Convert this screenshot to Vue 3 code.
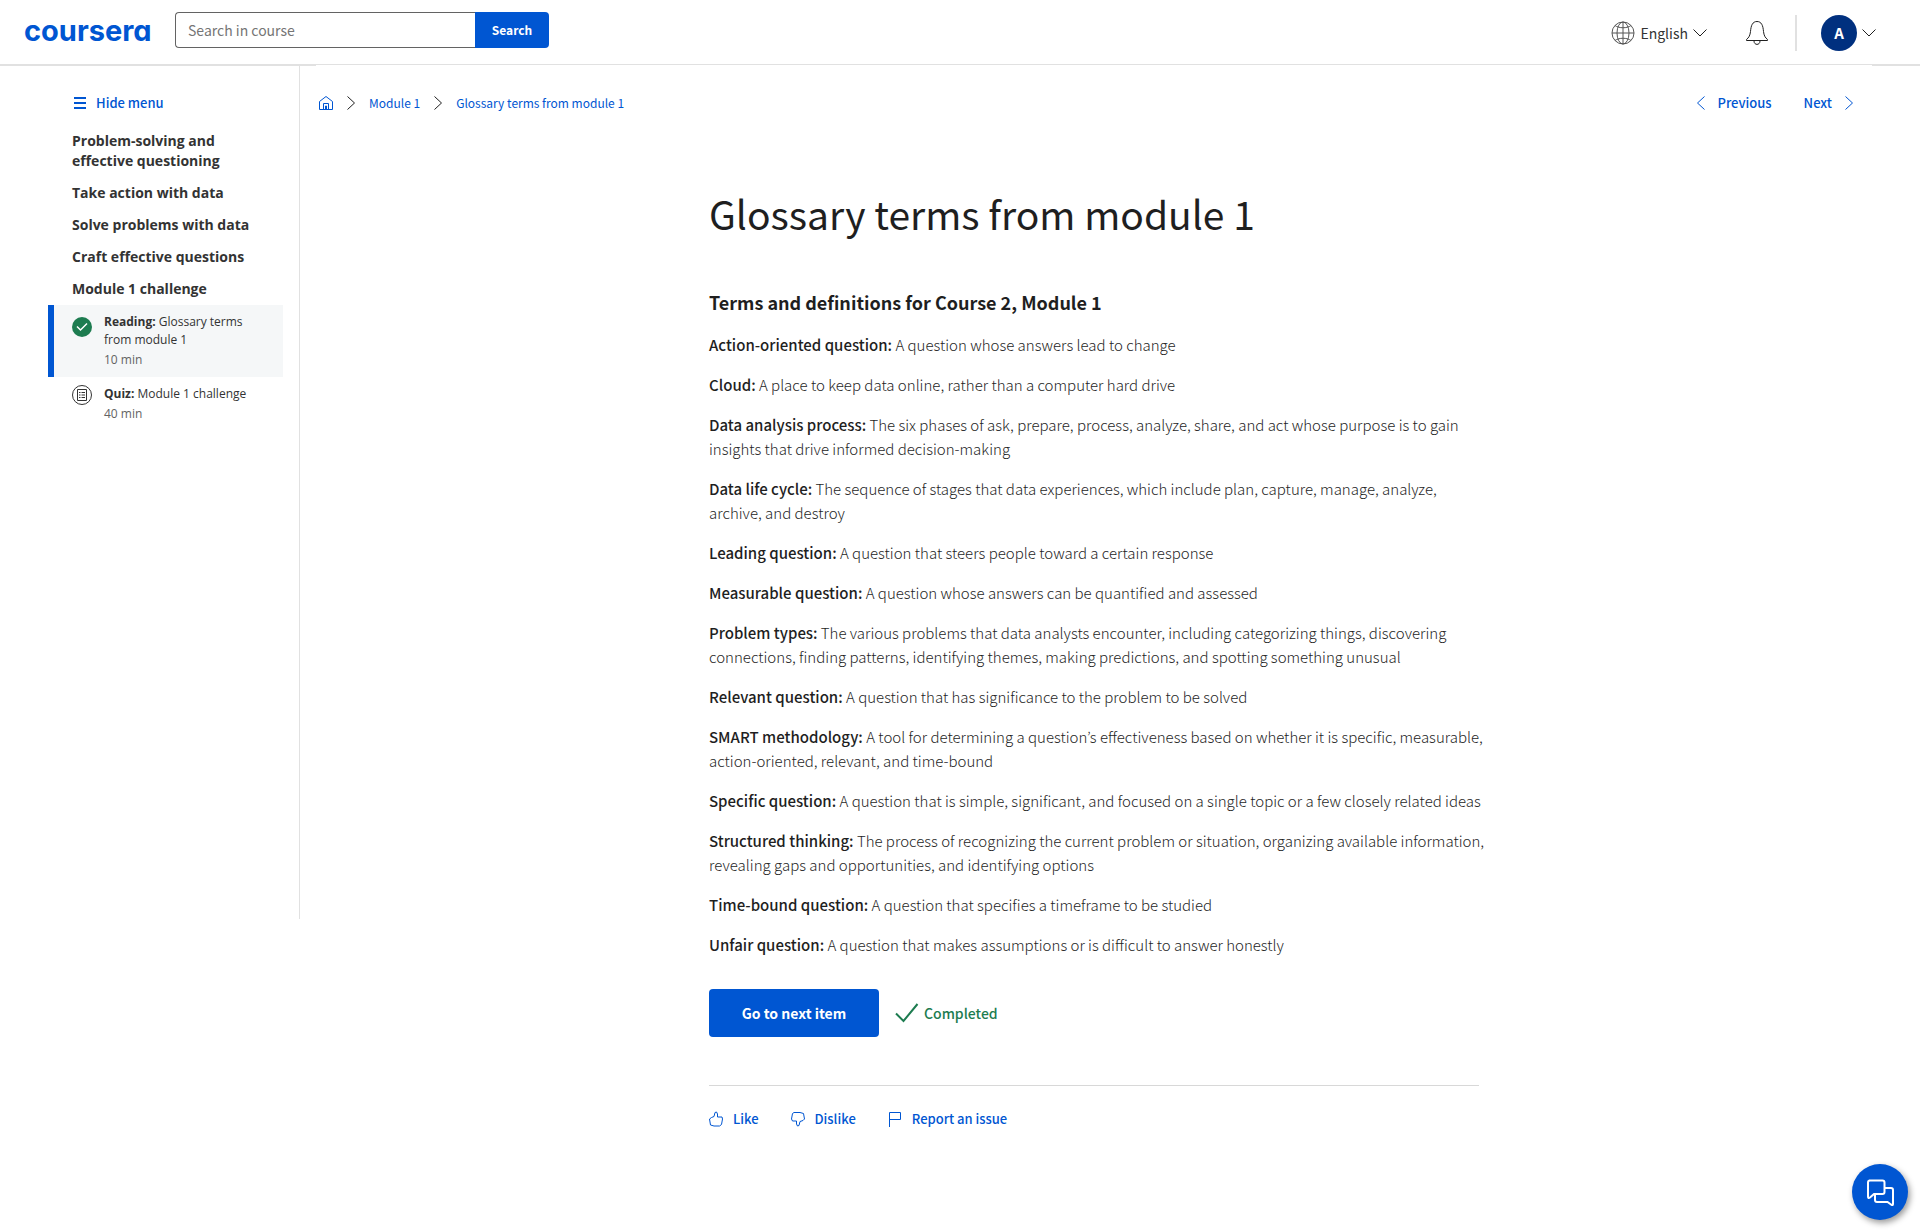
<script setup>
const sections = [
  'Problem-solving and effective questioning',
  'Take action with data',
  'Solve problems with data',
  'Craft effective questions',
  'Module 1 challenge',
]

const terms = [
  { term: 'Action-oriented question:', text: 'A question whose answers lead to change' },
  { term: 'Cloud:', text: 'A place to keep data online, rather than a computer hard drive' },
  { term: 'Data analysis process:', text: 'The six phases of ask, prepare, process, analyze, share, and act whose purpose is to gain insights that drive informed decision-making' },
  { term: 'Data life cycle:', text: 'The sequence of stages that data experiences, which include plan, capture, manage, analyze, archive, and destroy' },
  { term: 'Leading question:', text: 'A question that steers people toward a certain response' },
  { term: 'Measurable question:', text: 'A question whose answers can be quantified and assessed' },
  { term: 'Problem types:', text: 'The various problems that data analysts encounter, including categorizing things, discovering connections, finding patterns, identifying themes, making predictions, and spotting something unusual' },
  { term: 'Relevant question:', text: 'A question that has significance to the problem to be solved' },
  { term: 'SMART methodology:', text: 'A tool for determining a question’s effectiveness based on whether it is specific, measurable, action-oriented, relevant, and time-bound' },
  { term: 'Specific question:', text: 'A question that is simple, significant, and focused on a single topic or a few closely related ideas' },
  { term: 'Structured thinking:', text: 'The process of recognizing the current problem or situation, organizing available information, revealing gaps and opportunities, and identifying options' },
  { term: 'Time-bound question:', text: 'A question that specifies a timeframe to be studied' },
  { term: 'Unfair question:', text: 'A question that makes assumptions or is difficult to answer honestly' },
]
</script>

<template>
  <div class="page">
    <header class="header">
      <a class="logo" href="#">coursera</a>
      <form class="search" role="search" @submit.prevent>
        <input type="text" placeholder="Search in course" aria-label="Search in course" />
        <button type="submit">Search</button>
      </form>
      <div class="tools">
        <button class="language" type="button">
          <svg width="24" height="24" viewBox="0 0 24 24" aria-hidden="true">
            <circle cx="12" cy="12" r="11" />
            <ellipse cx="12" cy="12" rx="6" ry="11" />
            <path d="M1 12h22M12 1v22M4 4.500c4 3 12 3 16 0M4 19.500c4-3 12-3 16 0" />
          </svg>
          <span>English</span>
          <svg class="dark" width="14" height="8" viewBox="0 0 14 8" aria-hidden="true"><path d="M.500.500 7 7 13.500.500" /></svg>
        </button>
        <button class="bell" type="button" aria-label="Notifications">
          <svg class="dark" width="24" height="26" viewBox="0 0 24 26" aria-hidden="true">
            <path d="M1.500 20.500v-1c2.500-2 3.500-4 4-8C6 5.500 7.500 1.500 12 1.500s6 4 6.500 10c.5 4 1.500 6 4 8v1zM9 21c0 4.500 6 4.500 6 0" />
          </svg>
        </button>
        <span class="rule"></span>
        <button class="account" type="button" aria-label="Account">
          <span class="avatar">A</span>
          <svg class="dark" width="14" height="8" viewBox="0 0 14 8" aria-hidden="true"><path d="M.500.500 7 7 13.500.500" /></svg>
        </button>
      </div>
    </header>

    <div class="body">
      <aside class="sidebar">
        <button class="hide" type="button">
          <svg width="12" height="12" viewBox="0 0 12 12" aria-hidden="true"><path d="M0 1h12M0 6h12M0 11h12" /></svg>
          Hide menu
        </button>
        <h2 v-for="s in sections" :key="s">{{ s }}</h2>
        <a class="item active" href="#">
          <svg width="20" height="20" viewBox="0 0 20 20" aria-hidden="true">
            <circle cx="10" cy="10" r="10" fill="#1d7c50" />
            <path d="m5 9.500 3.500 3.500 6.500-6.500" fill="none" stroke="#fff" stroke-width="1.500" />
          </svg>
          <span class="item-text"><span><b>Reading:</b> Glossary terms from module 1</span><small>10 min</small></span>
        </a>
        <a class="item" href="#">
          <svg width="20" height="20" viewBox="0 0 20 20" fill="none" stroke="#333" aria-hidden="true">
            <circle cx="10" cy="10" r="9.500" />
            <path d="M5.500 4.500h9v11h-9zM7 7.500h1.500M9.500 7.500H13M7 10h1.500M9.500 10H13M7 12.500h1.500M9.500 12.500H13" />
          </svg>
          <span class="item-text"><span><b>Quiz:</b> Module 1 challenge</span><small>40 min</small></span>
        </a>
      </aside>

      <main class="main">
        <div class="topbar">
          <nav class="crumbs" aria-label="Breadcrumb">
            <a href="#" aria-label="Home">
              <svg width="14" height="14" viewBox="0 0 14 14" aria-hidden="true"><path d="M.500 5.500 7 .500l6.500 5v8H.500zM4.500 13.500v-6h5v6M6.500 10h1v3.500h-1z" /></svg>
            </a>
            <svg class="dark" width="8" height="14" viewBox="0 0 8 14" aria-hidden="true"><path d="m.500.500 7 6.500-7 6.500" /></svg>
            <a href="#">Module 1</a>
            <svg class="dark" width="8" height="14" viewBox="0 0 8 14" aria-hidden="true"><path d="m.500.500 7 6.500-7 6.500" /></svg>
            <a href="#">Glossary terms from module 1</a>
          </nav>
          <nav class="pager" aria-label="Items">
            <a href="#">
              <svg width="8" height="14" viewBox="0 0 8 14" aria-hidden="true"><path d="m7.500.500-7 6.500 7 6.500" /></svg>
              Previous
            </a>
            <a href="#">
              Next
              <svg width="8" height="14" viewBox="0 0 8 14" aria-hidden="true"><path d="m.500.500 7 6.500-7 6.500" /></svg>
            </a>
          </nav>
        </div>

        <article class="article">
          <h1>Glossary terms from module 1</h1>
          <h2>Terms and definitions for Course 2, Module 1</h2>
          <p v-for="t in terms" :key="t.term"><strong>{{ t.term }}</strong> {{ t.text }}</p>
          <div class="complete">
            <button type="button">Go to next item</button>
            <span class="done">
              <svg width="24" height="20" viewBox="0 0 24 20" aria-hidden="true"><path d="m1 10.500 7.500 7.500L22.500 1" /></svg>
              Completed
            </span>
          </div>
          <div class="feedback">
            <button type="button">
              <svg width="14" height="16" viewBox="0 0 14 16" aria-hidden="true"><path d="M.500 8 2.500 6.500 5 5.500 6 1.500 7.500 1 8.500 3v3h4.500l.5 2-1 5.500-2 1.500H5l-3.500-1z" /></svg>
              Like
            </button>
            <button type="button">
              <svg width="14" height="16" viewBox="0 0 14 16" aria-hidden="true"><path d="M13.500 8 12 9.500 9 10.500 8 14.500 6.500 15 5.500 13v-3H1.500L.500 8l1-5.500L3 1.500h6l3.500 1z" /></svg>
              Dislike
            </button>
            <button type="button">
              <svg width="14" height="16" viewBox="0 0 14 16" aria-hidden="true"><path d="M1.500 16V1.500h11v7h-11" /></svg>
              Report an issue
            </button>
          </div>
        </article>
      </main>
    </div>

    <button class="chat" type="button" aria-label="Chat">
      <svg width="28" height="28" viewBox="0 0 28 28" aria-hidden="true">
        <path d="M3 2.500h13.500q2 0 2 2V14q0 2-2 2H8L4 19.500q-2 1.500-2-1v-14q0-2 2-2z" />
        <path d="M18.500 10H25q2 0 2 2v14q0 2-2 .500L21.500 24H11q-2 0-2-2v-6" />
      </svg>
    </button>
  </div>
</template>

<style>
body {
  margin: 0;
  background: #fff;
}
</style>

<style scoped>
.page {
  font-family: 'Noto Sans CJK KR', 'Noto Sans', sans-serif;
  font-size: 14px;
  line-height: 24px;
  color: #1f1f1f;
}
* {
  box-sizing: border-box;
}
svg {
  display: block;
  flex: none;
}
button {
  font: inherit;
  color: inherit;
  padding: 0;
  border: 0;
  background: none;
  cursor: pointer;
}
a {
  color: #0056d2;
  text-decoration: none;
}
.header {
  display: flex;
  align-items: flex-start;
  height: 66px;
  padding: 12px 44px 0 24px;
  border-bottom: 2px solid #e1e1e1;
}
.logo {
  width: 151px;
  font-family: Inter, sans-serif;
  font-feature-settings: 'cv11';
  font-size: 29px;
  font-weight: 700;
  line-height: 38px;
}
.search {
  display: flex;
  height: 36px;
}
.search input {
  width: 300px;
  padding: 0 12px;
  border: 1px solid #636363;
  border-right: 0;
  border-radius: 4px 0 0 4px;
  font: inherit;
}
.search input::placeholder {
  color: #757575;
}
.search button {
  width: 74px;
  border-radius: 0 4px 4px 0;
  background: #0056d2;
  color: #fff;
  font-size: 12px;
  font-weight: 700;
}
.tools {
  display: flex;
  align-items: center;
  height: 36px;
  margin: 3px 0 0 auto;
}
.tools svg,
.crumbs svg,
.pager svg,
.feedback svg,
.done svg,
.hide svg,
.chat svg {
  fill: none;
  stroke: currentColor;
}
.dark {
  color: #1f1f1f;
}
.language,
.account {
  display: flex;
  align-items: center;
  gap: 5px;
  color: #555;
}
.language span {
  color: #333;
}
.bell {
  margin: 0 26px 0 38px;
}
.rule {
  width: 2px;
  height: 36px;
  margin-right: 24px;
  background: #e1e1e1;
}
.avatar {
  width: 36px;
  border-radius: 50%;
  background: #00307f;
  color: #fff;
  font-size: 15px;
  font-weight: 700;
  line-height: 36px;
}
.body {
  display: flex;
  align-items: flex-start;
}
.sidebar {
  width: 300px;
  min-height: calc(75vh - 71px);
  padding: 25px 16px 0 48px;
  border-right: 1px solid #e1e1e1;
  font-family: 'Open Sans', sans-serif;
}
.hide {
  display: flex;
  align-items: center;
  gap: 10px;
  margin: 0 0 16px 26px;
  color: #0056d2;
  font-family: 'Noto Sans CJK KR', sans-serif;
  font-size: 13px;
  font-weight: 500;
}
.hide svg {
  stroke-width: 2;
}
.sidebar h2 {
  margin: 0 24px 12px;
  color: #333;
  font-size: 14px;
  font-weight: 700;
  line-height: 20px;
}
.sidebar h2:last-of-type {
  margin-bottom: 6px;
}
.item {
  display: flex;
  gap: 12px;
  padding: 8px 24px 8px 18px;
  border-left: 6px solid transparent;
  color: #333;
  font-size: 12px;
  font-weight: 400;
  line-height: 18px;
}
.item svg {
  margin-top: 4px;
}
.item + .item svg {
  margin-top: 0;
}
.item b {
  font-weight: 700;
}
.item small {
  display: block;
  margin-top: 2px;
  color: #636363;
  font-size: 12px;
}
.active {
  border-color: #0056d2;
  background: #f5f7f8;
}
.main {
  position: relative;
  flex: 1;
  margin: -1px 48px 0 16px;
  background: #fff;
}
.topbar,
.crumbs,
.pager,
.pager a,
.complete,
.done,
.feedback,
.feedback button {
  display: flex;
  align-items: center;
}
.topbar {
  justify-content: space-between;
  padding: 26px 19px 0 3px;
  font-size: 12px;
}
.crumbs {
  gap: 14px;
}
.pager {
  gap: 32px;
  font-size: 13px;
  font-weight: 500;
}
.pager a {
  gap: 13px;
}
.article {
  width: 770px;
  max-width: 100%;
  margin: 0 auto;
}
.article h1 {
  margin: 70px 0 49px;
  font-size: 39px;
  font-weight: 400;
  line-height: 56px;
}
.article h2 {
  margin: 0 0 19px;
  font-size: 18px;
  font-weight: 700;
}
.article p {
  margin: 0 -12px 16px 0;
  font-size: 15px;
  font-weight: 300;
}
.article strong {
  font-weight: 500;
}
.complete {
  gap: 16px;
  margin-top: 32px;
}
.complete button {
  width: 170px;
  height: 48px;
  border-radius: 4px;
  background: #0056d2;
  color: #fff;
  font-weight: 700;
}
.done {
  gap: 5px;
  color: #1d7c50;
  font-weight: 500;
}
.done svg {
  stroke-width: 2;
}
.feedback {
  gap: 32px;
  margin-top: 48px;
  padding: 21px 0 64px;
  border-top: 1px solid #d8d8d8;
}
.feedback button {
  gap: 10px;
  color: #0056d2;
  font-size: 13px;
  font-weight: 500;
}
.chat {
  position: fixed;
  right: 12px;
  bottom: 12px;
  display: grid;
  place-items: center;
  width: 56px;
  height: 56px;
  border-radius: 50%;
  background: #0056d2;
  color: #fff;
  box-shadow: 2px 3px 6px rgba(0, 0, 0, 0.4);
}
.chat svg {
  stroke-width: 2;
}
</style>
